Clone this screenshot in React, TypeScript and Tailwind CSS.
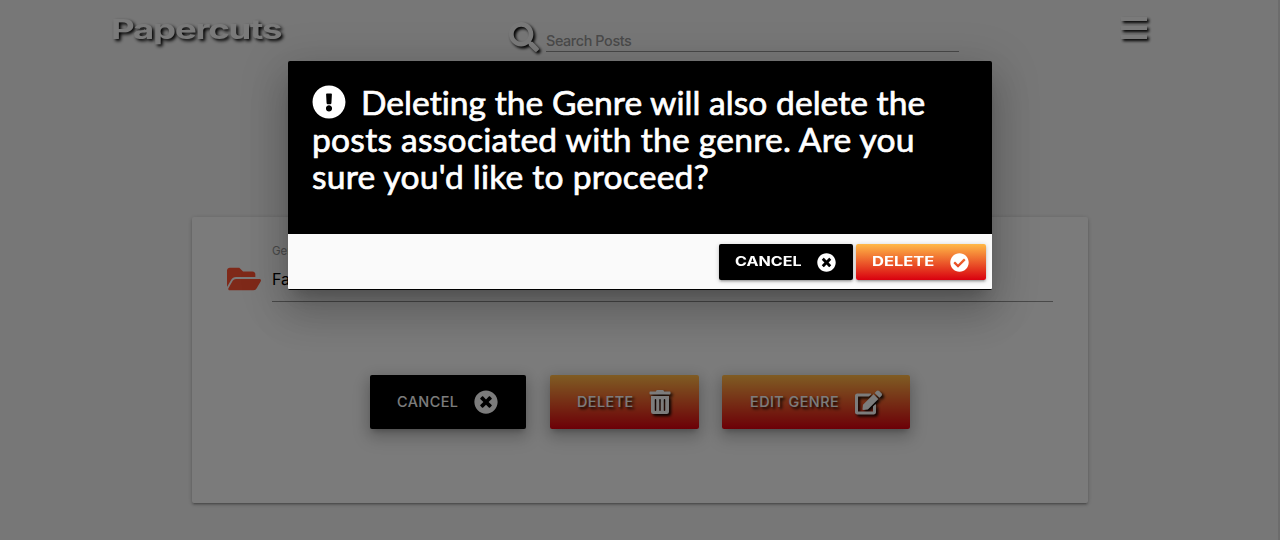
import React from "react";
import {
  FaCheckCircle,
  FaEdit,
  FaExclamationCircle,
  FaFolderOpen,
  FaSearch,
  FaTimesCircle,
  FaTrashAlt,
} from "react-icons/fa";

const shadowIcon = "[filter:drop-shadow(2px_2px_1.5px_#000)]";
const raised =
  "shadow-[0_8px_17px_2px_rgba(0,0,0,0.14),0_3px_14px_2px_rgba(0,0,0,0.12),0_5px_5px_-3px_rgba(0,0,0,0.2)]";
const low =
  "shadow-[0_2px_2px_0_rgba(0,0,0,0.14),0_3px_1px_-2px_rgba(0,0,0,0.12),0_1px_5px_0_rgba(0,0,0,0.2)]";
const flame = "bg-[linear-gradient(to_bottom,#ffb947,#d9000f)]";

function Header() {
  return (
    <header className="flex h-16 items-start pl-[111px]">
      <div className="w-[398px] pt-[12px]">
        <span className="inline-block origin-left scale-x-[1.355] text-[27px] leading-[36px] font-bold tracking-[-0.9px] text-[#f4f4f4] [text-shadow:1.5px_2px_3px_#000]">
          Papercuts
        </span>
      </div>
      <div className="flex w-[450px] pt-[22px]">
        <FaSearch size={30} className={`mr-[7px] shrink-0 text-[#f4f4f4] ${shadowIcon}`} />
        <div className="flex h-[30px] flex-1 items-end border-b border-[#919191] pb-[1px] text-[14.4px] leading-[19px] font-medium tracking-[-0.4px] text-[#959595]">
          <span>Search Posts</span>
        </div>
      </div>
      <div className={`mt-[17px] ml-[162px] flex w-[26px] flex-col gap-[5px] ${shadowIcon}`}>
        <i className="h-[4px] bg-[#f4f4f4]" />
        <i className="h-[4px] bg-[#f4f4f4]" />
        <i className="h-[4px] bg-[#f4f4f4]" />
      </div>
    </header>
  );
}

function GenreCard() {
  return (
    <main className={`mx-auto mt-[153px] h-[286px] w-[896px] rounded-[2px] bg-[#f6f6f6] ${low}`}>
      <div className="flex pt-[27px] pl-[35px]">
        <FaFolderOpen size={34} className="mt-[18px] mr-[11px] shrink-0 text-[#ff5233]" />
        <div className="h-[58px] w-[781px] border-b border-[#929292]">
          <div className="text-[11.5px] leading-[15px] text-[#959595]">Genre</div>
          <div className="mt-[10px] text-[16px] leading-[21px] text-black">Fantasy</div>
        </div>
      </div>
      <div className="mt-[73px] flex pl-[178px] text-[14.4px] font-medium tracking-[0.45px] text-[#f8f8f8]">
        <button className={`flex h-[54px] w-[156px] items-center rounded-[2px] bg-black pl-[27px] ${raised}`}>
          <span className="w-[77px] text-left">CANCEL</span>
          <FaTimesCircle size={24} />
        </button>
        <button className={`ml-6 flex h-[54px] w-[149px] items-center rounded-[2px] pl-[27px] ${flame} ${raised}`}>
          <span className="w-[71px] text-left [text-shadow:2px_2px_3px_#000]">DELETE</span>
          <FaTrashAlt size={24} className={shadowIcon} />
        </button>
        <button className={`ml-[23px] flex h-[54px] w-[188px] items-center rounded-[2px] pl-[28px] ${flame} ${raised}`}>
          <span className="w-[105px] text-left [text-shadow:2px_2px_3px_#000]">EDIT GENRE</span>
          <FaEdit size={27} className={shadowIcon} />
        </button>
      </div>
    </main>
  );
}

function ConfirmDialog() {
  return (
    <div className="absolute inset-0 bg-black/50 pt-[61px]">
      <section
        role="dialog"
        className="mx-auto h-[229px] w-[704px] overflow-hidden rounded-[2px] bg-black shadow-[0_24px_38px_3px_rgba(0,0,0,0.14),0_9px_46px_8px_rgba(0,0,0,0.12),0_11px_15px_-7px_rgba(0,0,0,0.2)]"
      >
        <h4 className="h-[173px] pt-[23px] pl-[24px] font-[Lato,sans-serif] text-[33.6px] leading-[37px] whitespace-nowrap text-white [font-variant-ligatures:none] [-webkit-text-stroke:0.7px_white]">
          <span className="flex">
            <FaExclamationCircle size={34} className="mt-px mr-[15px]" />
            <span className="tracking-[0.03px]">Deleting the Genre will also delete the</span>
          </span>
          <span className="block tracking-[0.25px]">posts associated with the genre. Are you</span>
          <span className="block tracking-[0.23px]">sure you&apos;d like to proceed?</span>
        </h4>
        <footer className="flex h-[55px] justify-end gap-[3px] bg-[#fafafa] pt-[10px] pr-[6px] text-[13px] font-bold text-white">
          <button className={`flex h-9 w-[134px] items-center rounded-[2px] bg-black pl-4 ${low}`}>
            <span className="w-[82px] text-left">
              <span className="inline-block origin-left scale-x-[1.24]">CANCEL</span>
            </span>
            <FaTimesCircle size={19} />
          </button>
          <button className={`flex h-9 w-[130px] items-center rounded-[2px] pl-4 ${flame} ${low}`}>
            <span className="w-[78px] text-left">
              <span className="inline-block origin-left scale-x-[1.27]">DELETE</span>
            </span>
            <FaCheckCircle size={19} />
          </button>
        </footer>
      </section>
    </div>
  );
}

export default function App() {
  return (
    <div className="relative h-[540px] w-[1280px] overflow-hidden border-r-2 border-[#6c6c6c] bg-[#efefef] font-[Inter,sans-serif]">
      <div className="w-[1280px]">
        <Header />
        <GenreCard />
      </div>
      <div className="absolute inset-y-0 left-0 w-[1280px]">
        <ConfirmDialog />
      </div>
    </div>
  );
}
